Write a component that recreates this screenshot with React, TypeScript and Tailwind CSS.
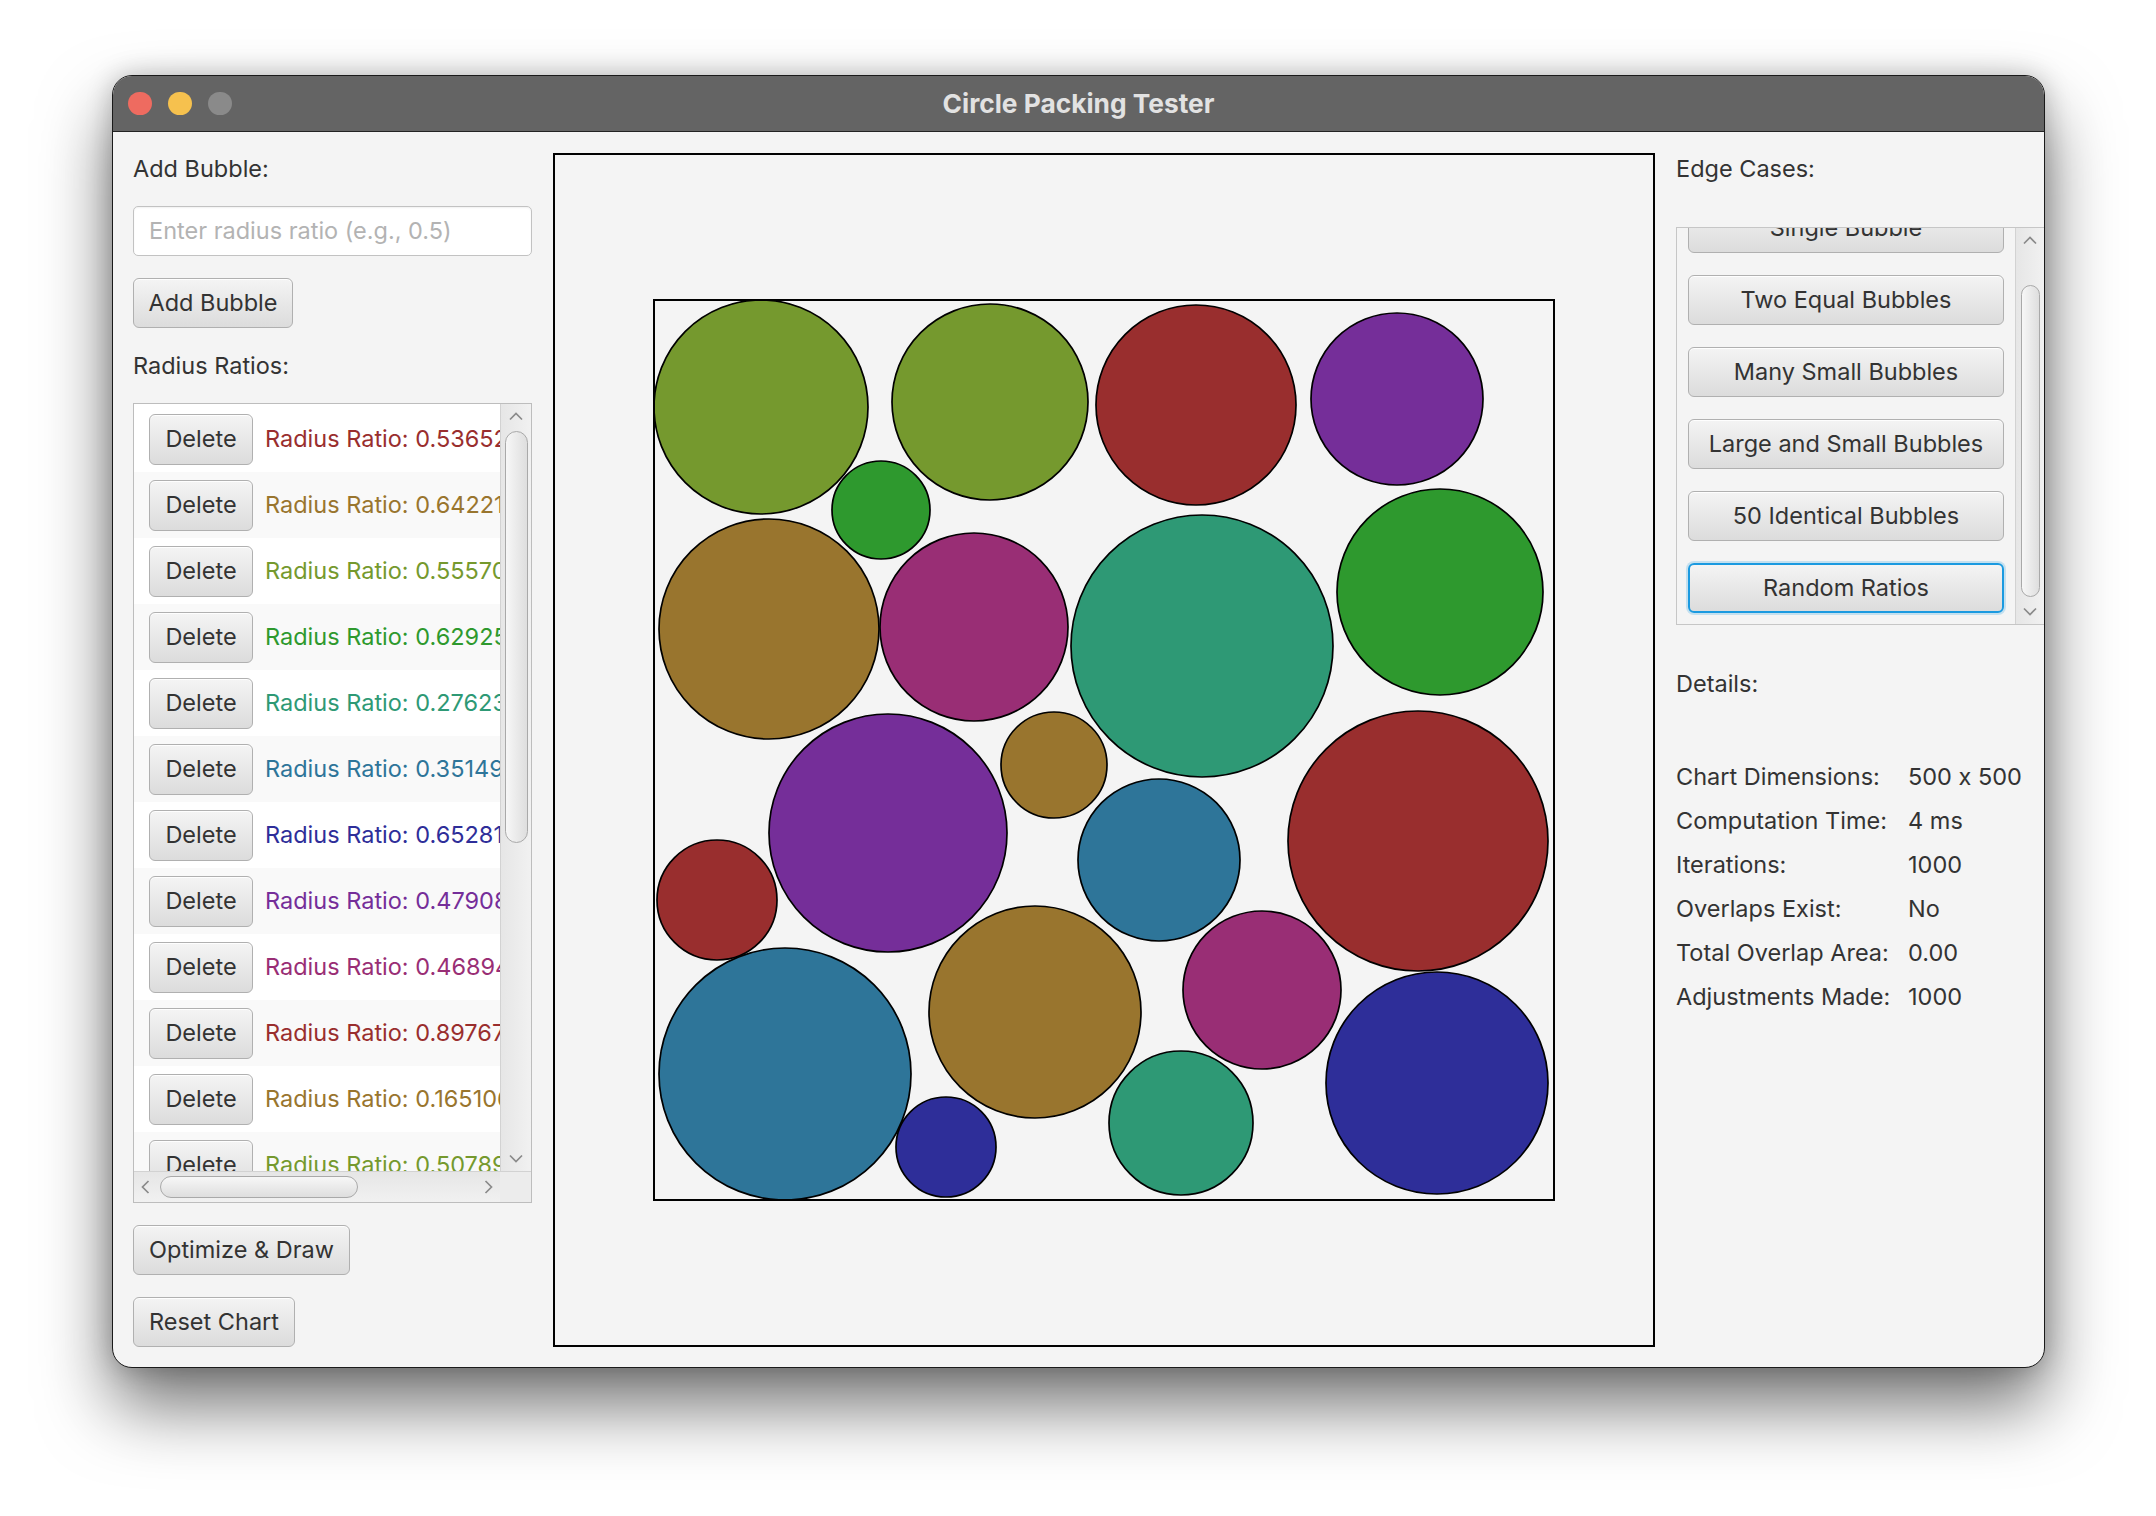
import React from 'react'

const palette = ['#992e2e', '#99752e', '#75992e', '#2e992e', '#2e9975', '#2e7599', '#2e2e99', '#752e99', '#992e75']

const ratios = [
  '0.5365248', '0.6422187', '0.5557031', '0.6292558', '0.2762344', '0.3514922',
  '0.6528143', '0.4790865', '0.4689421', '0.8976732', '0.1651063', '0.5078921',
]

// chart-local circles, in screen px (chart is 500 x 500 drawn at 900 x 900)
const circles = [
  { x: 107, y: 107, r: 107, c: '#75992e' },
  { x: 336, y: 102, r: 98, c: '#75992e' },
  { x: 542, y: 105, r: 100, c: '#992e2e' },
  { x: 743, y: 99, r: 86, c: '#752e99' },
  { x: 227, y: 210, r: 49, c: '#2e992e' },
  { x: 115, y: 329, r: 110, c: '#99752e' },
  { x: 320, y: 327, r: 94, c: '#992e75' },
  { x: 548, y: 346, r: 131, c: '#2e9975' },
  { x: 786, y: 292, r: 103, c: '#2e992e' },
  { x: 234, y: 533, r: 119, c: '#752e99' },
  { x: 400, y: 465, r: 53, c: '#99752e' },
  { x: 505, y: 560, r: 81, c: '#2e7599' },
  { x: 764, y: 541, r: 130, c: '#992e2e' },
  { x: 63, y: 600, r: 60, c: '#992e2e' },
  { x: 131, y: 774, r: 126, c: '#2e7599' },
  { x: 381, y: 712, r: 106, c: '#99752e' },
  { x: 608, y: 690, r: 79, c: '#992e75' },
  { x: 783, y: 783, r: 111, c: '#2e2e99' },
  { x: 292, y: 847, r: 50, c: '#2e2e99' },
  { x: 527, y: 823, r: 72, c: '#2e9975' },
]

const edgeCases = ['Single Bubble', 'Two Equal Bubbles', 'Many Small Bubbles', 'Large and Small Bubbles', '50 Identical Bubbles', 'Random Ratios']

const details = [
  ['Chart Dimensions:', '500 x 500'],
  ['Computation Time:', '4 ms'],
  ['Iterations:', '1000'],
  ['Overlaps Exist:', 'No'],
  ['Total Overlap Area:', '0.00'],
  ['Adjustments Made:', '1000'],
]

const btn =
  'flex h-[50px] shrink-0 items-center justify-center whitespace-nowrap rounded-[6px] border border-[#b0b0b0] bg-linear-to-b from-[#f4f4f4] to-[#dcdcdc] text-[#333] shadow-[inset_0_1px_0_rgba(255,255,255,0.9)]'

function Chevron({ dir }: { dir: 'up' | 'down' | 'left' | 'right' }) {
  const rot = { up: 'rotate-0', down: 'rotate-180', left: '-rotate-90', right: 'rotate-90' }[dir]
  return (
    <svg width="16" height="10" viewBox="0 0 16 10" className={rot}>
      <polyline points="2,8.5 8,2.5 14,8.5" fill="none" stroke="#8a8a8a" strokeWidth="1.7" />
    </svg>
  )
}

function VScroll({ w, thumbTop, thumbH, thumbW }: { w: string; thumbTop: string; thumbH: string; thumbW: string }) {
  return (
    <div className={`flex ${w} shrink-0 flex-col items-center border-l border-[#d2d2d2] bg-linear-to-r from-[#e6e6e6] to-[#f1f1f1]`}>
      <div className="flex h-[24px] items-center justify-center">
        <Chevron dir="up" />
      </div>
      <div className={`${thumbTop} ${thumbH} ${thumbW} rounded-full border border-[#a9a9a9] bg-linear-to-r from-[#f7f7f7] to-[#dedede]`} />
      <div className="flex-1" />
      <div className="flex h-[24px] items-center justify-center">
        <Chevron dir="down" />
      </div>
    </div>
  )
}

function LeftPanel() {
  return (
    <div className="flex w-[399px] shrink-0 flex-col gap-[22px]">
      <div className="h-[31px] leading-[31px]">Add Bubble:</div>
      <div className="flex h-[50px] items-center rounded-[5px] border border-[#c2c2c2] bg-white pl-[15px] text-[#b3b3b3] shadow-[inset_0_1px_2px_rgba(0,0,0,0.06)]">
        Enter radius ratio (e.g., 0.5)
      </div>
      <div className={`${btn} w-[160px]`}>Add Bubble</div>
      <div className="h-[31px] leading-[31px]">Radius Ratios:</div>

      <div className="flex h-[800px] flex-col border border-[#bdbdbd] bg-white">
        <div className="flex min-h-0 flex-1">
          <div className="min-w-0 flex-1 overflow-hidden pt-[2px]">
            {ratios.map((r, i) => (
              <div
                key={i}
                className={`flex h-[66px] items-center gap-[12px] whitespace-nowrap pl-[15px] ${i % 2 ? 'bg-[#f9f9f9]' : 'bg-white'}`}
              >
                <div className={`${btn} h-[51px] w-[104px]`}>Delete</div>
                <span style={{ color: palette[i % palette.length] }}>Radius Ratio: {r}</span>
              </div>
            ))}
          </div>
          <VScroll w="w-[31px]" thumbTop="mt-[3px]" thumbH="h-[412px]" thumbW="w-[23px]" />
        </div>
        <div className="flex h-[31px] border-t border-[#d2d2d2] bg-linear-to-b from-[#e6e6e6] to-[#f1f1f1]">
          <div className="flex flex-1 items-center">
            <div className="flex w-[22px] justify-center">
              <Chevron dir="left" />
            </div>
            <div className="ml-[4px] h-[22px] w-[198px] rounded-full border border-[#a9a9a9] bg-linear-to-b from-[#f7f7f7] to-[#dedede]" />
            <div className="flex-1" />
            <div className="flex w-[22px] justify-center">
              <Chevron dir="right" />
            </div>
          </div>
          <div className="w-[31px] bg-[#ececec]" />
        </div>
      </div>

      <div className={`${btn} w-[217px]`}>Optimize &amp; Draw</div>
      <div className={`${btn} w-[162px]`}>Reset Chart</div>
    </div>
  )
}

function Chart() {
  return (
    <div className="flex w-[1102px] shrink-0 items-center justify-center border-2 border-black">
      <div className="h-[902px] w-[902px] border-2 border-black">
        <svg width="898" height="898" viewBox="1 1 898 898">
          {circles.map((c, i) => (
            <circle key={i} cx={c.x} cy={c.y} r={c.r} fill={c.c} stroke="#000" strokeWidth="1.7" />
          ))}
        </svg>
      </div>
    </div>
  )
}

function RightPanel() {
  return (
    <div className="flex min-w-0 flex-1 flex-col">
      <div className="h-[31px] leading-[31px]">Edge Cases:</div>
      <div className="mt-[43px] flex h-[398px] border border-r-0 border-[#c6c6c6]">
        <div className="min-w-0 flex-1 overflow-hidden pl-[11px] pr-[11px]">
          <div className="-mt-[25px] flex flex-col gap-[22px]">
            {edgeCases.map((e) => (
              <div
                key={e}
                className={
                  e === 'Random Ratios'
                    ? 'flex h-[50px] items-center justify-center rounded-[6px] border-2 border-[#1b9ae0] bg-linear-to-b from-[#f4f4f4] to-[#dcdcdc] text-[#333] shadow-[0_0_0_2px_rgba(27,154,224,0.22)]'
                    : btn
                }
              >
                {e}
              </div>
            ))}
          </div>
        </div>
        <VScroll w="w-[29px]" thumbTop="mt-[33px]" thumbH="h-[312px]" thumbW="w-[19px]" />
      </div>

      <div className="mt-[43px] h-[31px] leading-[31px]">Details:</div>
      <div className="mt-[56px] grid grid-cols-[232px_1fr]">
        {details.map(([k, v]) => (
          <React.Fragment key={k}>
            <div className="h-[44px] leading-[44px] whitespace-nowrap">{k}</div>
            <div className="h-[44px] leading-[44px] whitespace-nowrap">{v}</div>
          </React.Fragment>
        ))}
      </div>
    </div>
  )
}

export default function App() {
  return (
    <div className="h-[1516px] w-[2156px] overflow-hidden bg-white pl-[112px] pt-[75px] font-['Inter','Liberation_Sans',sans-serif] text-[23.5px] text-[#333] [font-feature-settings:'calt'_0]">
      <div className="flex h-[1293px] w-[1933px] flex-col overflow-hidden rounded-[20px] border border-[#1a1a1a] bg-[#f4f4f4] shadow-[0_38px_70px_rgba(0,0,0,0.55),0_0_26px_rgba(0,0,0,0.22)]">
        <div className="grid h-[56px] shrink-0 grid-cols-[1fr_auto_1fr] items-center border-b border-[#222] bg-[#646464]">
          <div className="flex items-center gap-[16.5px] pl-[15px]">
            <div className="h-[23.5px] w-[23.5px] rounded-full bg-[#ee6b60]" />
            <div className="h-[23.5px] w-[23.5px] rounded-full bg-[#f6c14e]" />
            <div className="h-[23.5px] w-[23.5px] rounded-full bg-[#8a8a8a]" />
          </div>
          <div className="text-[26.3px] font-bold text-[#e2e2e2]">Circle Packing Tester</div>
          <div />
        </div>
        <div className="flex min-h-0 flex-1 gap-[21px] pb-[20px] pl-[20px] pt-[21px]">
          <LeftPanel />
          <Chart />
          <RightPanel />
        </div>
      </div>
    </div>
  )
}
